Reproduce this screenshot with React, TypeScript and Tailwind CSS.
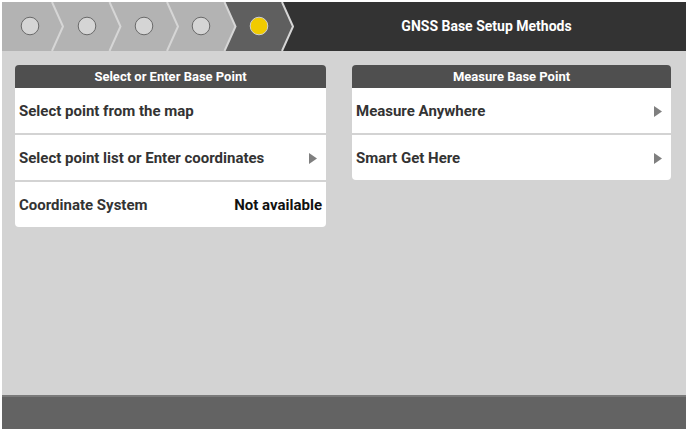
import React from "react";

const SEPS = [50, 107.5, 165, 222.5, 280];
const CIRCLES = [28, 85, 142, 199, 257];

function Stepper() {
  const mid = 24.5;
  const chev = (x: number) => `${x},0 ${x + 11},${mid} ${x},49`;
  const a = SEPS[3];
  const b = SEPS[4];
  return (
    <svg width="292" height="49" viewBox="0 0 292 49" className="shrink-0">
      <polygon points={`0,0 ${a},0 ${a + 11},${mid} ${a},49 0,49`} fill="#b3b3b3" />
      <polygon points={`${a},0 ${b},0 ${b + 11},${mid} ${b},49 ${a},49 ${a + 11},${mid}`} fill="#5f5f5f" />
      {SEPS.map((x) => (
        <polyline key={x} points={chev(x)} fill="none" stroke="#d6d6d6" strokeWidth="2" />
      ))}
      {CIRCLES.map((cx, i) =>
        i === 4 ? (
          <circle key={cx} cx={cx} cy={24} r={8.8} fill="#f0cb00" stroke="#cfcfcf" strokeWidth="1" />
        ) : (
          <circle key={cx} cx={cx} cy={24} r={8.8} fill="#d5d5d5" stroke="#6a6a6a" strokeWidth="1" />
        )
      )}
    </svg>
  );
}

function Arrow() {
  return (
    <svg width="8" height="11" viewBox="0 0 8 11" className="shrink-0">
      <polygon points="0,0 8,5.5 0,11" fill="#7f7f7f" />
    </svg>
  );
}

function Row({ label, right, arrow }: { label: string; right?: string; arrow?: boolean }) {
  return (
    <div className="flex h-[45px] items-center justify-between bg-white pl-[4px] pr-[9px] pt-[2px]">
      <span className="text-[15px] font-bold text-[#333]">{label}</span>
      {arrow && <Arrow />}
      {right && <span className="-mr-[5px] text-[15px] font-bold text-[#111]">{right}</span>}
    </div>
  );
}

function Card({ title, children, width }: { title: string; children: React.ReactNode; width: string }) {
  return (
    <div className={`${width} flex flex-col overflow-hidden rounded-[4px]`}>
      <div className="flex h-[23px] items-center justify-center bg-[#4f4f4f] text-[13px] font-bold text-white">
        {title}
      </div>
      <div className="flex flex-col gap-[2px]">{children}</div>
    </div>
  );
}

export default function App() {
  return (
    <div className="h-[431px] w-[688px] bg-white p-[2px] font-['Roboto',sans-serif]">
      <div className="flex h-full flex-col">
        <header className="flex h-[49px] items-center bg-[#333333]">
          <Stepper />
          <div className="flex-1 pr-[7px] text-center text-[14px] font-bold text-white">
            GNSS Base Setup Methods
          </div>
        </header>
        <main className="flex flex-1 items-start gap-[26px] bg-[#d3d3d3] pl-[13px] pt-[14px]">
          <Card title="Select or Enter Base Point" width="w-[311px]">
            <Row label="Select point from the map" />
            <Row label="Select point list or Enter coordinates" arrow />
            <Row label="Coordinate System" right="Not available" />
          </Card>
          <Card title="Measure Base Point" width="w-[319px]">
            <Row label="Measure Anywhere" arrow />
            <Row label="Smart Get Here" arrow />
          </Card>
        </main>
        <footer className="h-[34px] border-t-[2px] border-[#7a7a7a] bg-[#636363]" />
      </div>
    </div>
  );
}
